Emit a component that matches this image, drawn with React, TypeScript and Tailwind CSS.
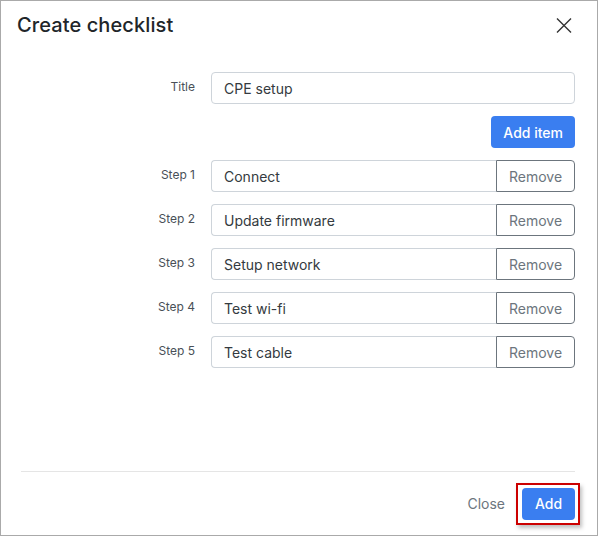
import React from 'react';

const steps = ['Connect', 'Update firmware', 'Setup network', 'Test wi-fi', 'Test cable'];

const font = { fontFamily: 'Inter, "Noto Sans", sans-serif' };

export default function App() {
  return (
    <div style={font} className="w-[598px] h-[536px] bg-white border border-[#aaaaaa] flex flex-col text-[#212529]">
      {/* Header */}
      <div className="flex items-center justify-between pl-[16px] pr-[25px] h-[48px]">
        <h2 className="text-[20px] font-medium leading-[24px] tracking-[0.1px]">Create checklist</h2>
        <button className="w-[16px] h-[16px] flex items-center justify-center text-[#333]" aria-label="Close">
          <svg width="17" height="17" viewBox="0 0 16 16" fill="none" stroke="currentColor" strokeWidth="1.4">
            <path d="M1 1L15 15M15 1L1 15" />
          </svg>
        </button>
      </div>

      {/* Body */}
      <div className="flex-1 flex flex-col gap-[12px] pt-[23px] pl-[20px] pr-[22px]">
        <div className="flex items-start gap-[16px]">
          <label className="w-[174px] text-right text-[12px] text-[#495057] pt-[7px] leading-[16px]">Title</label>
          <input
            defaultValue="CPE setup"
            className="flex-1 h-[32px] border border-[#ced4da] rounded-[4px] px-[12px] text-[14px] text-[#343a40] outline-none"
          />
        </div>
        <div className="flex justify-end">
          <button className="h-[32px] px-[12px] rounded-[4px] bg-[#3a7ef0] text-white text-[14px] font-medium">
            Add item
          </button>
        </div>
        {steps.map((s, i) => (
          <div key={s} className="flex items-start gap-[16px]">
            <label className="w-[174px] text-right text-[12px] text-[#495057] pt-[7px] leading-[16px]">Step {i + 1}</label>
            <div className="flex-1 flex h-[32px]">
              <input
                defaultValue={s}
                className="flex-1 min-w-0 h-[32px] border border-[#ced4da] border-r-0 rounded-l-[4px] px-[12px] text-[14px] text-[#343a40] outline-none"
              />
              <button className="w-[79px] h-[32px] border border-[#6c757d] rounded-r-[4px] text-[14px] text-[#6c757d]">
                Remove
              </button>
            </div>
          </div>
        ))}
      </div>

      {/* Footer */}
      <div className="mx-[20px] mr-[22px] border-t border-[#e5e5e5] h-[64px] flex items-center justify-end gap-[17px]">
        <button className="text-[14px] text-[#6c757d]">Close</button>
        <span className="relative">
          <button className="h-[32px] w-[53px] rounded-[4px] bg-[#3a7ef0] text-white text-[14px] font-medium">
            Add
          </button>
          <span className="absolute -left-[6px] -right-[5px] -top-[5px] -bottom-[5px] border-2 border-[#cc0000] shadow-[2px_3px_4px_rgba(0,0,0,0.25)] pointer-events-none" />
        </span>
      </div>
    </div>
  );
}
